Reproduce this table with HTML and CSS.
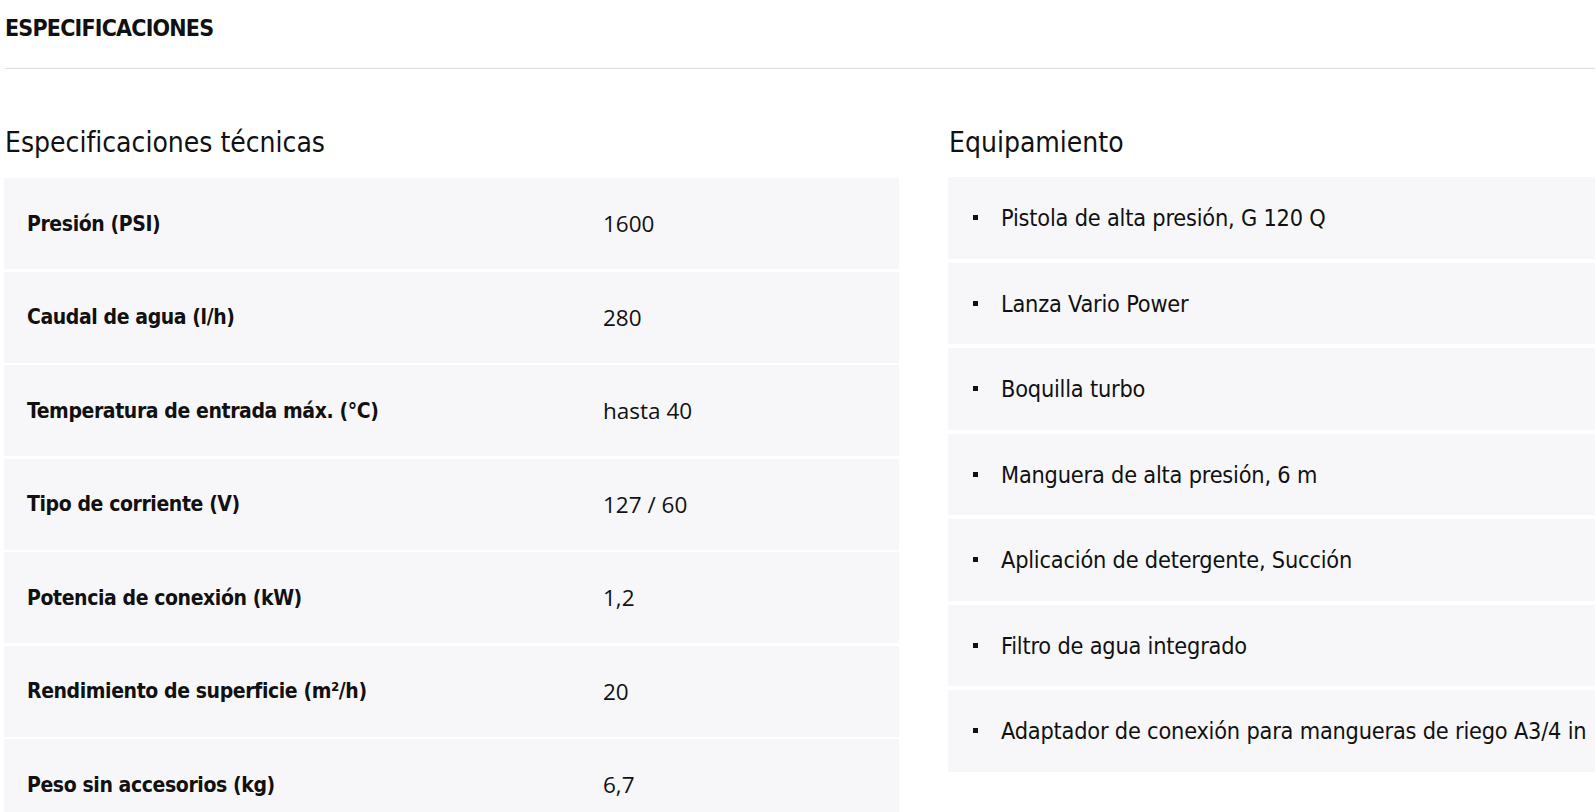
FILE: index.html
```html
<!DOCTYPE html>
<html lang="es">
<head>
    <meta charset="UTF-8">
    <meta name="viewport" content="width=device-width, initial-scale=1.0">
    <title>Especificaciones</title>
    <link rel="stylesheet" href="styles.css">
</head>
<body>

    <div class="section-head">
        <h1>ESPECIFICACIONES</h1>
    </div>

    <div class="specs">
        <div class="specs-col">
            <h2>Especificaciones técnicas</h2>
            <div class="spec-table">
                <div class="spec-row"><span class="label">Presión (PSI)</span><span class="value">1600</span></div>
                <div class="spec-row"><span class="label">Caudal de agua (l/h)</span><span class="value">280</span></div>
                <div class="spec-row"><span class="label">Temperatura de entrada máx. (°C)</span><span class="value">hasta 40</span></div>
                <div class="spec-row"><span class="label">Tipo de corriente (V)</span><span class="value">127 / 60</span></div>
                <div class="spec-row"><span class="label">Potencia de conexión (kW)</span><span class="value">1,2</span></div>
                <div class="spec-row"><span class="label">Rendimiento de superficie (m²/h)</span><span class="value">20</span></div>
                <div class="spec-row"><span class="label">Peso sin accesorios (kg)</span><span class="value">6,7</span></div>
            </div>
        </div>

        <div class="equip-col">
            <h2>Equipamiento</h2>
            <ul class="equip-list">
                <li>Pistola de alta presión, G 120 Q</li>
                <li>Lanza Vario Power</li>
                <li>Boquilla turbo</li>
                <li>Manguera de alta presión, 6 m</li>
                <li>Aplicación de detergente, Succión</li>
                <li>Filtro de agua integrado</li>
                <li>Adaptador de conexión para mangueras de riego A3/4 in</li>
            </ul>
        </div>
    </div>

</body>
</html>
```

FILE: styles.css
```css
body {
    margin: 0;
    background-color: #fff;
    color: #111;
    font-family: "DejaVu Sans Condensed", "DejaVu Sans", sans-serif;
    overflow: hidden;
}

.section-head {
    margin-left: 5px;
    border-bottom: 1px solid #dcdcdc;
    height: 68px;
}

h1 {
    margin: 0;
    padding-top: 14px;
    font-size: 23px;
    font-weight: bold;
    letter-spacing: -0.8px;
    line-height: 28px;
}

.specs {
    display: grid;
    grid-template-columns: 895px 700px;
    column-gap: 49px;
    padding-left: 4px;
}

h2 {
    margin: 0;
    padding-top: 58px;
    height: 51px;
    font-size: 28px;
    font-weight: normal;
    line-height: 32px;
    padding-left: 1px;
}

.spec-table {
    display: flex;
    flex-direction: column;
    gap: 2.5px;
}

.spec-row {
    display: flex;
    align-items: center;
    height: 91px;
    background-color: #f7f7f9;
    padding-left: 23px;
}

.label {
    width: 576px;
    font-size: 21px;
    font-weight: bold;
    letter-spacing: -0.4px;
}

.value {
    font-family: "Open Sans", sans-serif;
    font-size: 22.5px;
}

.equip-list {
    margin: 0;
    padding: 0;
    list-style: none;
    display: flex;
    flex-direction: column;
    gap: 4px;
    margin-top: -1px;
}

.equip-list li {
    display: flex;
    align-items: center;
    gap: 23px;
    height: 81.5px;
    background-color: #f7f7f9;
    padding-left: 25px;
    font-size: 23.3px;
    letter-spacing: -0.2px;
    white-space: nowrap;
}

.equip-list li::before {
    content: "";
    width: 5px;
    height: 5px;
    flex-shrink: 0;
    background-color: #111;
}
```
